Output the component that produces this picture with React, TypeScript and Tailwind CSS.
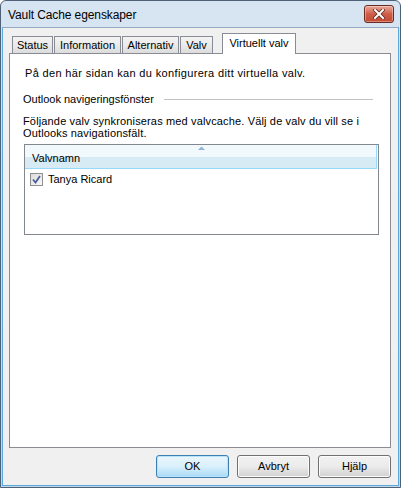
import React from 'react';

const tabs = [
  { label: 'Status', w: 'w-[41px]', ml: 'ml-[3px]' },
  { label: 'Information', w: 'w-[67px]', ml: 'ml-[1px]' },
  { label: 'Alternativ', w: 'w-[57px]', ml: 'ml-[1px]' },
  { label: 'Valv', w: 'w-[33px]', ml: 'ml-[1px]' },
];

function CloseButton() {
  return (
    <div className="w-[30px] h-[18px] rounded-[3px] border border-[#6b2b25] bg-gradient-to-b from-[#e9a99a] via-[#cf5c48] to-[#c24a30] flex items-center justify-center shadow-[inset_0_0_0_1px_rgba(255,255,255,0.35)]">
      <svg width="12" height="10" viewBox="0 0 12 10">
        <path d="M2 1 L10 9 M10 1 L2 9" stroke="#5a2a22" strokeWidth="3.6" strokeLinecap="square" />
        <path d="M2 1 L10 9 M10 1 L2 9" stroke="#ffffff" strokeWidth="2" strokeLinecap="square" />
      </svg>
    </div>
  );
}

function DlgButton({ label, primary }: { label: string; primary?: boolean }) {
  return (
    <div
      className={`w-[73px] h-[23px] rounded-[3px] border flex items-center justify-center text-[11px] text-black ${
        primary
          ? 'border-[#3c7fb1] bg-gradient-to-b from-[#eaf6fd] via-[#d9f0fc] to-[#a7d9f5] shadow-[inset_0_0_0_1px_#b9e3f9]'
          : 'border-[#707070] bg-gradient-to-b from-[#f2f2f2] via-[#ebebeb] to-[#d0d0d0] shadow-[inset_0_0_0_1px_#fcfcfc]'
      }`}
    >
      {label}
    </div>
  );
}

export default function App() {
  return (
    <div className="w-[401px] h-[488px] bg-white" style={{ fontFamily: '"Liberation Sans", Arial, sans-serif' }}>
      <div className="w-full h-full flex flex-col rounded-t-[6px] border border-[#4e6176] bg-gradient-to-b from-[#d7e5f2] to-[#c3d7eb] px-[1px] pb-[1px]">
        {/* Title bar */}
        <div className="h-[26px] flex items-start justify-between pl-[6px] pr-[5px]">
          <span className="text-[12px] text-black mt-[7px] leading-[14px] tracking-[-0.1px]">Vault Cache egenskaper</span>
          <div className="mt-[4px]">
            <CloseButton />
          </div>
        </div>

        {/* Client area */}
        <div className="flex-1 flex flex-col bg-[#f0f0f0] border border-[#5aa8dc] border-t-[#94aac4] pt-[5px] pl-[6px] pr-[7px] text-[11px] text-black">
          {/* Tab strip */}
          <div className="flex items-end h-[20px] relative z-10">
            {tabs.map((t) => (
              <div
                key={t.label}
                className={`${t.w} ${t.ml} h-[17px] border border-b-0 border-[#898c95] bg-gradient-to-b from-[#f3f3f3] via-[#ebebeb] to-[#dcdcdc] flex items-center justify-center leading-[13px] pt-[1px]`}
              >
                {t.label}
              </div>
            ))}
            <div className="w-[74px] ml-[9px] h-[21px] mb-[-1px] border border-b-0 border-[#898c95] bg-white flex items-start justify-center pt-[3px] leading-[13px]">
              Virtuellt valv
            </div>
          </div>

          {/* Tab panel */}
          <div className="h-[395px] bg-white border border-[#898c95] pt-[13px] pl-[15px] pr-[16px]">
            <div className="leading-[13px] tracking-[0.35px]">På den här sidan kan du konfigurera ditt virtuella valv.</div>

            <div className="flex items-center mt-[13px] -ml-[2px]">
              <span className="leading-[13px]">Outlook navigeringsfönster</span>
              <div className="flex-1 h-px bg-[#c2c2c2] ml-[10px] mr-[1px]" />
            </div>

            <div className="mt-[9px] -ml-[2px] leading-[12px] tracking-[0.15px]">
              Följande valv synkroniseras med valvcache. Välj de valv du vill se i
              <br />
              Outlooks navigationsfält.
            </div>

            <div className="mt-[5px] -ml-[1px] w-[355px] h-[91px] border border-[#828790] bg-white">
              <div className="relative h-[24px] mr-[1px] border-b border-r border-[#96d9f9] bg-gradient-to-b from-[#f2f9fc] from-50% to-[#d7ebf5] to-50% flex items-end pl-[7px] pb-[3px] leading-[13px]">
                Valvnamn
                <svg className="absolute left-[173px] top-[1px]" width="7" height="4" viewBox="0 0 7 4">
                  <path d="M0 4 L3.5 0.5 L7 4 Z" fill="#8fb2d6" />
                </svg>
              </div>
              <div className="flex items-center h-[21px] pl-[5px]">
                <div className="w-[13px] h-[13px] border border-[#8e8f8f] bg-gradient-to-br from-[#dcdcdc] to-[#f8f8f8] flex items-center justify-center">
                  <svg width="9" height="9" viewBox="0 0 9 9">
                    <path d="M1 4.5 L3.5 7.5 L8 1" stroke="#4a5f97" strokeWidth="1.8" fill="none" />
                  </svg>
                </div>
                <span className="ml-[5px] leading-[13px]">Tanya Ricard</span>
              </div>
            </div>
          </div>

          {/* Buttons */}
          <div className="flex justify-end gap-[8px] mt-[7px]">
            <DlgButton label="OK" primary />
            <DlgButton label="Avbryt" />
            <DlgButton label="Hjälp" />
          </div>
        </div>
      </div>
    </div>
  );
}
